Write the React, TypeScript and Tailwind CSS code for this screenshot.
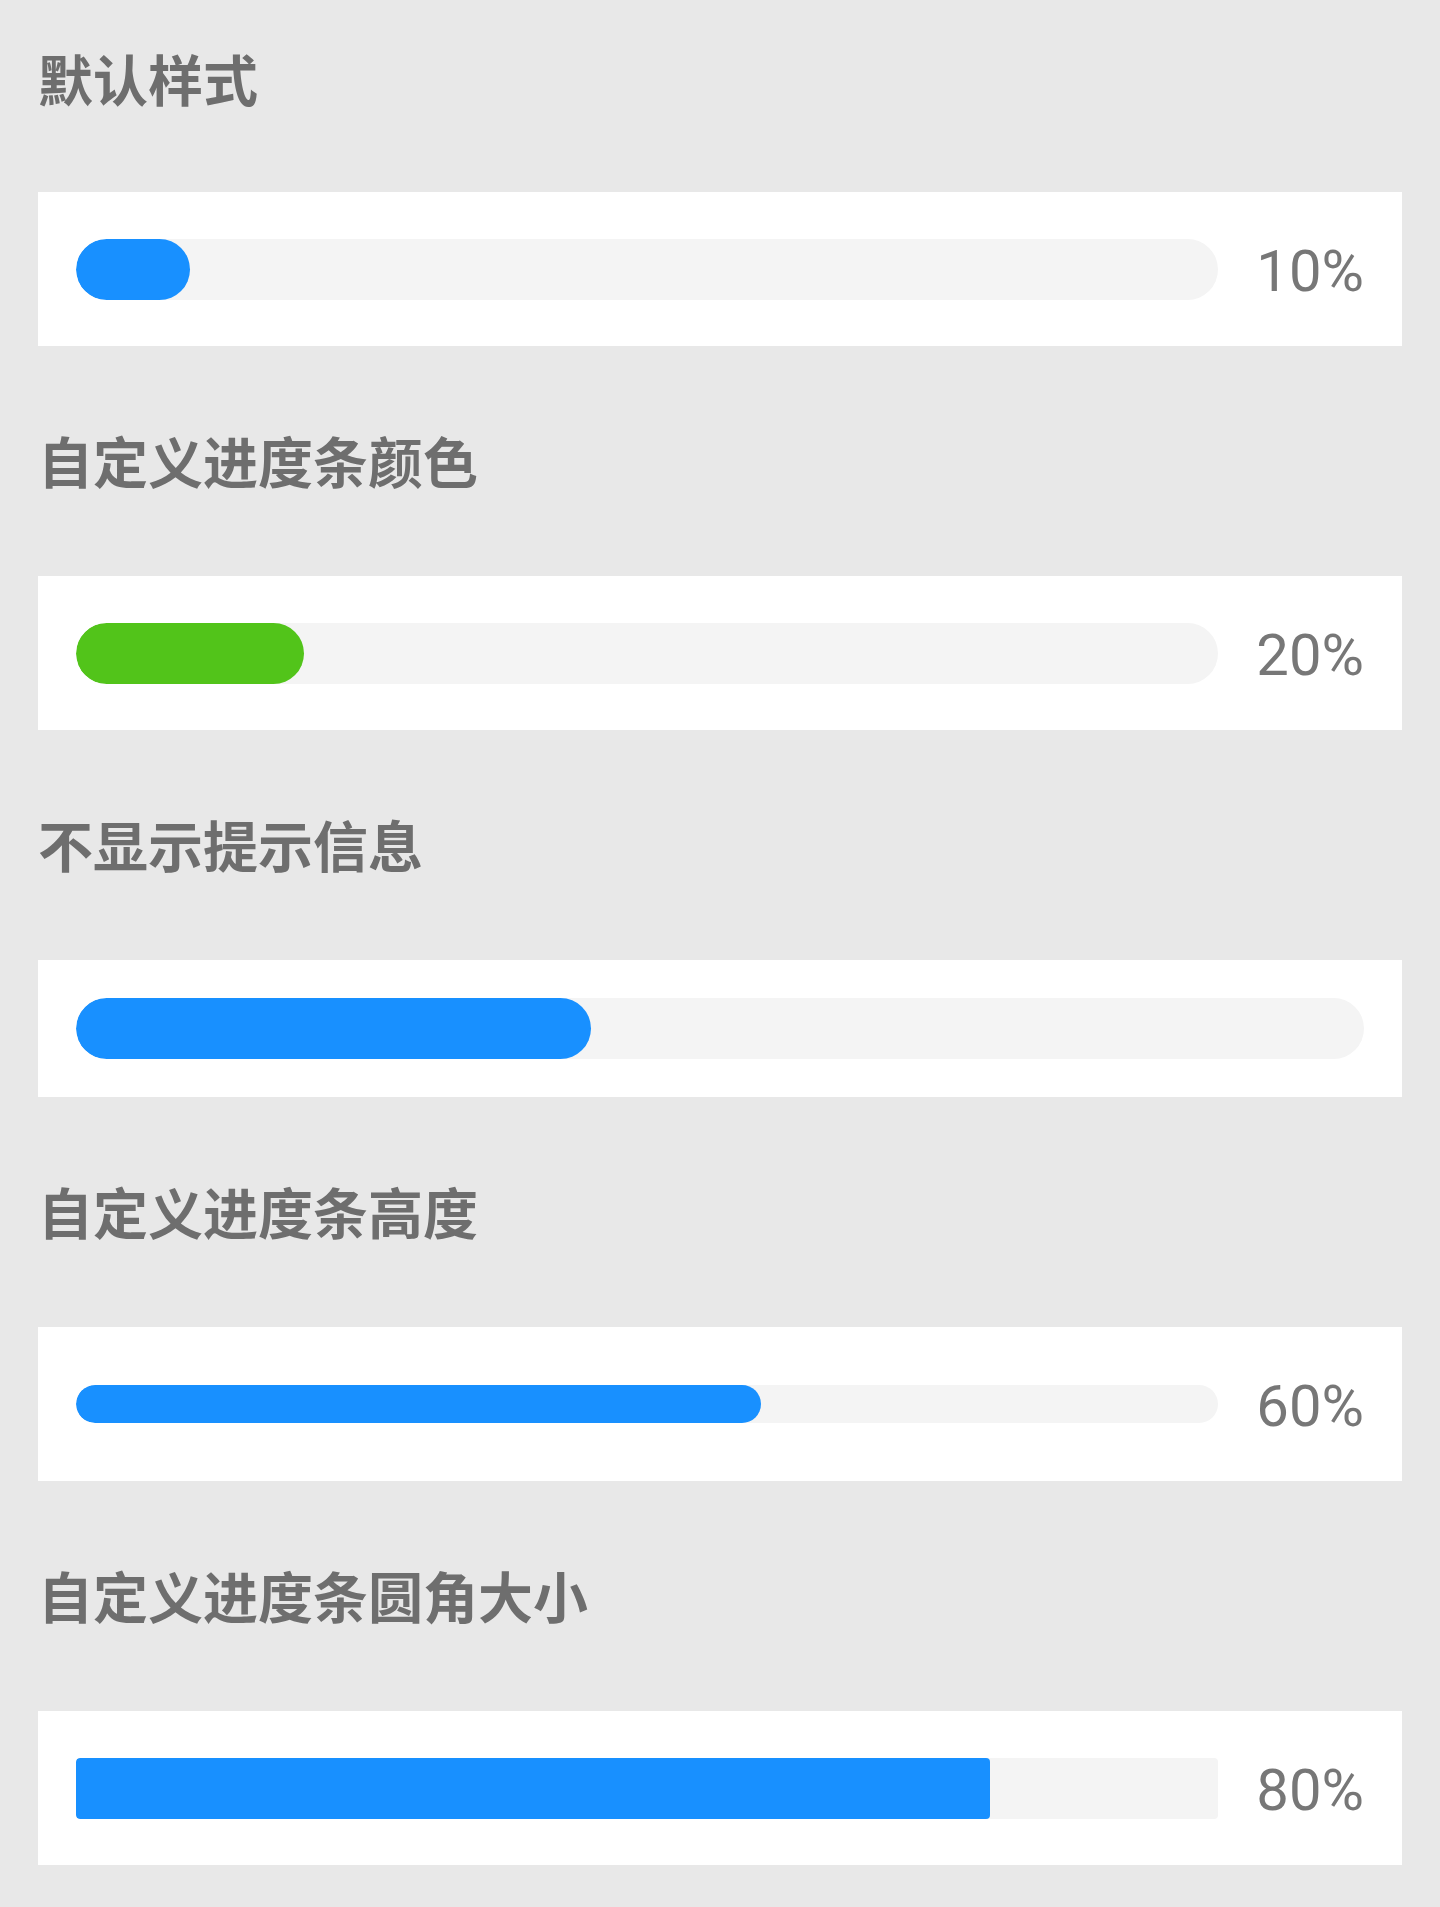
const rows = [
  { title: '默认样式', pct: 10, color: 'bg-[#1890ff]', bar: 'h-[61px] rounded-full', showInfo: true },
  { title: '自定义进度条颜色', pct: 20, color: 'bg-[#52c41a]', bar: 'h-[61px] rounded-full', showInfo: true },
  { title: '不显示提示信息', pct: 40, color: 'bg-[#1890ff]', bar: 'h-[61px] rounded-full', showInfo: false },
  { title: '自定义进度条高度', pct: 60, color: 'bg-[#1890ff]', bar: 'h-[38px] rounded-full', showInfo: true },
  { title: '自定义进度条圆角大小', pct: 80, color: 'bg-[#1890ff]', bar: 'h-[61px] rounded-[4px]', showInfo: true },
]

function Progress({ pct, color, bar, showInfo }: { pct: number; color: string; bar: string; showInfo: boolean }) {
  return (
    <div className="flex items-center bg-white px-[38px] py-[38px]">
      <div className={`flex-1 overflow-hidden bg-[#f4f4f4] ${bar}`}>
        <div className={`h-full ${color} ${bar}`} style={{ width: `${pct}%` }} />
      </div>
      {showInfo && (
        <div className="w-[146px] pt-[5px] text-right font-['Roboto',sans-serif] text-[58px] leading-[73px] text-[#777]">
          {pct}%
        </div>
      )}
    </div>
  )
}

export default function App() {
  return (
    <div className="min-h-[1907px] bg-[#e8e8e8] px-[38px] pb-[42px] font-['Noto_Sans_CJK_SC',sans-serif]">
      {rows.map((r, i) => (
        <div key={r.title}>
          <div
            className={`${i === 0 ? 'pt-[50px] pb-[88px]' : 'pt-[86px] pb-[90px]'} text-[55px] font-bold leading-[54px] text-[#6e6e6e]`}
          >
            {r.title}
          </div>
          <Progress pct={r.pct} color={r.color} bar={r.bar} showInfo={r.showInfo} />
        </div>
      ))}
    </div>
  )
}
